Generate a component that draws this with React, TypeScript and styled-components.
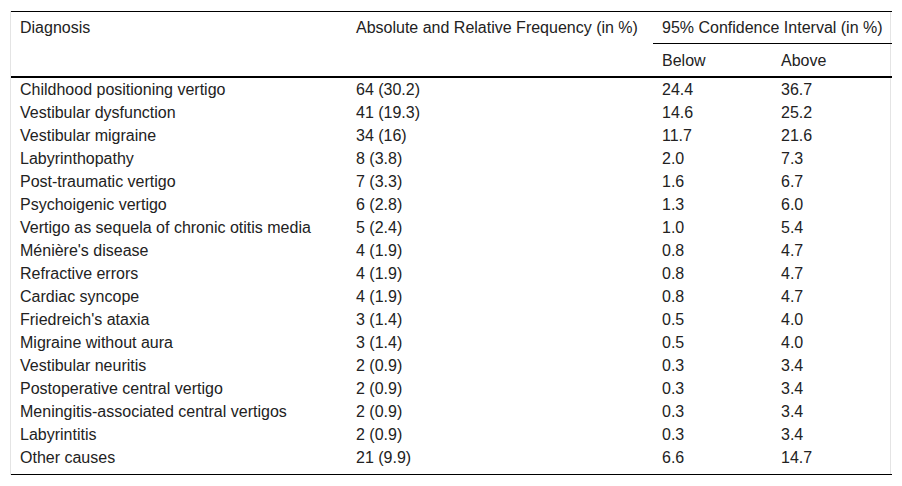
import styled, { createGlobalStyle } from 'styled-components'

type Row = {
  diagnosis: string
  frequency: string
  below: string
  above: string
}

const rows: Row[] = [
  { diagnosis: 'Childhood positioning vertigo', frequency: '64 (30.2)', below: '24.4', above: '36.7' },
  { diagnosis: 'Vestibular dysfunction', frequency: '41 (19.3)', below: '14.6', above: '25.2' },
  { diagnosis: 'Vestibular migraine', frequency: '34 (16)', below: '11.7', above: '21.6' },
  { diagnosis: 'Labyrinthopathy', frequency: '8 (3.8)', below: '2.0', above: '7.3' },
  { diagnosis: 'Post-traumatic vertigo', frequency: '7 (3.3)', below: '1.6', above: '6.7' },
  { diagnosis: 'Psychoigenic vertigo', frequency: '6 (2.8)', below: '1.3', above: '6.0' },
  { diagnosis: 'Vertigo as sequela of chronic otitis media', frequency: '5 (2.4)', below: '1.0', above: '5.4' },
  { diagnosis: "Ménière's disease", frequency: '4 (1.9)', below: '0.8', above: '4.7' },
  { diagnosis: 'Refractive errors', frequency: '4 (1.9)', below: '0.8', above: '4.7' },
  { diagnosis: 'Cardiac syncope', frequency: '4 (1.9)', below: '0.8', above: '4.7' },
  { diagnosis: "Friedreich's ataxia", frequency: '3 (1.4)', below: '0.5', above: '4.0' },
  { diagnosis: 'Migraine without aura', frequency: '3 (1.4)', below: '0.5', above: '4.0' },
  { diagnosis: 'Vestibular neuritis', frequency: '2 (0.9)', below: '0.3', above: '3.4' },
  { diagnosis: 'Postoperative central vertigo', frequency: '2 (0.9)', below: '0.3', above: '3.4' },
  { diagnosis: 'Meningitis-associated central vertigos', frequency: '2 (0.9)', below: '0.3', above: '3.4' },
  { diagnosis: 'Labyrintitis', frequency: '2 (0.9)', below: '0.3', above: '3.4' },
  { diagnosis: 'Other causes', frequency: '21 (9.9)', below: '6.6', above: '14.7' }
]

export default function App() {
  return (
    <>
      <GlobalStyle />
      <Wrapper>
        <Table>
          <colgroup>
            <col style={{ width: 336 }} />
            <col style={{ width: 306 }} />
            <col style={{ width: 119 }} />
            <col style={{ width: 120 }} />
          </colgroup>
          <thead>
            <tr>
              <Th rowSpan={2}>Diagnosis</Th>
              <Th rowSpan={2}>Absolute and Relative Frequency (in %)</Th>
              <Th colSpan={2} $underline>
                95% Confidence Interval (in %)
              </Th>
            </tr>
            <tr>
              <Th $middle>Below</Th>
              <Th $middle>Above</Th>
            </tr>
          </thead>
          <tbody>
            {rows.map((row, i) => (
              <Tr key={i} $last={i === rows.length - 1}>
                <Td>{row.diagnosis}</Td>
                <Td>{row.frequency}</Td>
                <Td>{row.below}</Td>
                <Td>{row.above}</Td>
              </Tr>
            ))}
          </tbody>
        </Table>
      </Wrapper>
    </>
  )
}

const GlobalStyle = createGlobalStyle`
  body {
    margin: 0;
    background: #fff;
    font-family: 'Liberation Sans', Arial, sans-serif;
    color: #222;
  }
`

const Wrapper = styled.div`
  margin: 11px 0 0 10px;
  width: 881px;
  border-left: 1px solid #e4e4e4;
  border-right: 1px solid #e4e4e4;
  box-sizing: border-box;
`

const Table = styled.table`
  width: 100%;
  border-collapse: collapse;
  table-layout: fixed;
  font-size: 16px;
  line-height: 17px;
  border-top: 1px solid #000;
  border-bottom: 1px solid #000;

  thead {
    border-bottom: 2px solid #000;
  }
`

const Th = styled.th<{ $underline?: boolean; $middle?: boolean }>`
  font-weight: normal;
  text-align: left;
  vertical-align: top;
  padding: 7px 10px 7px 9px;
  height: 31px;
  box-sizing: border-box;
  white-space: nowrap;
  border-bottom: ${({ $underline }) => ($underline ? '1px solid #000' : 'none')};
  ${({ $middle }) => $middle && 'padding-top: 8px;'}
`

const Tr = styled.tr<{ $last: boolean }>`
  td {
    padding-bottom: ${({ $last }) => ($last ? '8px' : '3px')};
  }
`

const Td = styled.td`
  padding: 3px 10px 3px 9px;
  height: 17px;
  vertical-align: top;
  white-space: nowrap;
`
